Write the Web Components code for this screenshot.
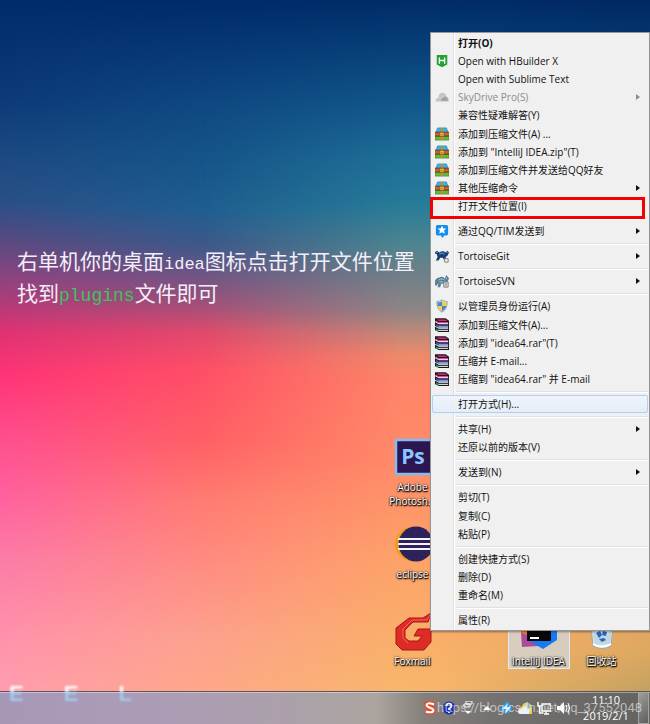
<!DOCTYPE html>
<html lang="zh-CN">
<head>
<meta charset="utf-8">
<title>Desktop</title>
<style>
    body {
        margin: 0;
        font-family: "Open Sans", "Noto Sans CJK SC", sans-serif;
        font-size: 10px;
    }
</style>
</head>
<body>
<desktop-screen>
    <desktop-note slot="note"></desktop-note>

    <desktop-icon slot="icons" icon="ps" style="grid-area: 1 / 1">Adobe<br>Photosh...</desktop-icon>
    <desktop-icon slot="icons" icon="eclipse" style="grid-area: 2 / 1">eclipse</desktop-icon>
    <desktop-icon slot="icons" icon="foxmail" style="grid-area: 3 / 1">Foxmail</desktop-icon>
    <desktop-icon slot="icons" icon="idea" style="grid-area: 3 / 3" selected>IntelliJ IDEA</desktop-icon>
    <desktop-icon slot="icons" icon="bin" style="grid-area: 3 / 4">回收站</desktop-icon>

    <context-menu slot="menu">
        <menu-item bold>打开(O)</menu-item>
        <menu-item icon="hbuilder">Open with HBuilder X</menu-item>
        <menu-item>Open with Sublime Text</menu-item>
        <menu-item icon="cloud" disabled submenu>SkyDrive Pro(S)</menu-item>
        <menu-item>兼容性疑难解答(Y)</menu-item>
        <menu-item icon="zip">添加到压缩文件(A) ...</menu-item>
        <menu-item icon="zip">添加到 "IntelliJ IDEA.zip"(T)</menu-item>
        <menu-item icon="zip">添加到压缩文件并发送给QQ好友</menu-item>
        <menu-item icon="zip" submenu>其他压缩命令</menu-item>
        <menu-item marked>打开文件位置(I)</menu-item>
        <menu-line></menu-line>
        <menu-item icon="tim" submenu>通过QQ/TIM发送到</menu-item>
        <menu-line></menu-line>
        <menu-item icon="git" submenu>TortoiseGit</menu-item>
        <menu-line></menu-line>
        <menu-item icon="svn" submenu>TortoiseSVN</menu-item>
        <menu-line></menu-line>
        <menu-item icon="shield">以管理员身份运行(A)</menu-item>
        <menu-item icon="rar">添加到压缩文件(A)...</menu-item>
        <menu-item icon="rar">添加到 "idea64.rar"(T)</menu-item>
        <menu-item icon="rar">压缩并 E-mail...</menu-item>
        <menu-item icon="rar">压缩到 "idea64.rar" 并 E-mail</menu-item>
        <menu-line></menu-line>
        <menu-item active>打开方式(H)...</menu-item>
        <menu-line></menu-line>
        <menu-item submenu>共享(H)</menu-item>
        <menu-item>还原以前的版本(V)</menu-item>
        <menu-line></menu-line>
        <menu-item submenu>发送到(N)</menu-item>
        <menu-line></menu-line>
        <menu-item>剪切(T)</menu-item>
        <menu-item>复制(C)</menu-item>
        <menu-item>粘贴(P)</menu-item>
        <menu-line></menu-line>
        <menu-item>创建快捷方式(S)</menu-item>
        <menu-item>删除(D)</menu-item>
        <menu-item>重命名(M)</menu-item>
        <menu-line></menu-line>
        <menu-item>属性(R)</menu-item>
    </context-menu>

    <task-bar slot="taskbar"></task-bar>
</desktop-screen>

<script>
    // 16x16 menu icons
    const MENU_ICONS = {
        hbuilder: `<path d="M2 1h12v11l-6 3-6-3z" fill="#1fa22e"/><path d="M5 4v7M11 4v7M5 7.5h6" stroke="#fff" stroke-width="1.6"/>`,
        cloud: `<path d="M1 13q-1-4 3-4 0-6 5-6 3 0 4 4 3 1 3 6z" fill="#c4c4c4"/><path d="M6 13q-1-3 2-4 1-3 4-2 3 0 4 6z" fill="#a2a2a2" stroke="#eee" stroke-width=".7"/>`,
        zip: `<path d="M3 1h10l2 5H1z" fill="#35b5e8" stroke="#1579a8" stroke-width=".7"/><path d="M0 6h16v4.500H0z" fill="#e5542e"/><path d="M0 10h16v5H0z" fill="#63b83c" stroke="#367b22" stroke-width=".6"/><path d="M0 6h16M0 10.500h16" stroke="#5b3a16"/><path d="M8 1v14" stroke="#c98a28" stroke-width="2.400"/><path d="M5.500 6h5v4.500h-5z" fill="#f8d052" stroke="#85501a"/><path d="M7 8.300h2" stroke="#85501a"/>`,
        tim: `<path d="M3 1h10q2 0 2 2v8q0 2-2 2h-2l-3 3-1-3H3q-2 0-2-2V3q0-2 2-2z" fill="#118df0"/><path d="M8 2l1.500 3 3.500.2-2.700 2.300.9 3.500L8 9.300 4.800 11l.9-3.500L3 5.200 6.500 5z" fill="#fff"/>`,
        git: `<path d="M0 4l2-2 3 2q4-3 7 0l2-2 2 2-2 4-2 1 1 3h-3l-1-2H6l-2 3H1l2-4-1-3-2-1z" fill="#173b72"/><path d="M5 6q3-3 6 0M1.500 4h1.500M13 4h1.500" fill="none" stroke="#78b9ed"/><path d="M11 11h4v4h-4z" fill="#eee" stroke="#777"/>`,
        svn: `<path d="M0 9q0-4 5-5 4-2 6 1l2-4 3 4-2 4 1 5h-4l-1-3H7l-1 4H3l1-5-2 3H0z" fill="#587d97"/><path d="M4 7q3-3 7 0M13 4v2M5 9h4" fill="none" stroke="#b3d4e5"/><path d="M10 9h5v6h-5z" fill="#ddd" stroke="#777"/><path d="M12.500 10v4" stroke="#777"/>`,
        shield: `<path d="M8 1q3 2 6 2 0 9-6 12Q2 12 2 3q3 0 6-2z" fill="#ddd" stroke="#8a9aa5"/><path d="M8 2.500V8H3V4q3 0 5-1.500zM8 8h5q-1 4-5 6z" fill="#4389c9"/><path d="M8 2.500Q10 4 13 4v4H8zM3 8h5v6Q4 12 3 8z" fill="#f5ce47"/>`,
        rar: `<path d="M0 1h12l4 3v2H4L0 3z" fill="#d02a78"/><path d="M0 6l4 2h12v3H4L0 9z" fill="#3755b8"/><path d="M0 11l4 2h12v3H4l-4-2z" fill="#129667"/><path d="M0 1h12l4 3H4zM0 5.500l4 2.300h12M0 10.500l4 2.300h12M.5 1v3M.5 6v3M.5 11v3M4 15.500h12" stroke="#24131d" stroke-width="1.200"/><path d="M4 6h11M4 10.300h11M4 14.300h11" stroke="#e5e0e0"/><path d="M15.500 4v12" stroke="#24131d"/>`
    };

    // 36x36 desktop icons
    const DESKTOP_ICONS = {
        ps: `<path d="M1 1h38v34H1z" fill="#2c1551" stroke="#81bcf3" stroke-width="2.500"/><text x="18" y="25" text-anchor="middle" font-family="Open Sans" font-size="21" font-weight="700" fill="#88c7ff" style="text-shadow: none">Ps</text>`,
        eclipse: `<circle cx="17" cy="18" r="17" fill="#f59b21"/><circle cx="21" cy="18" r="17.500" fill="#2d2259"/><path d="M3 13h36M3 18h36M3 23h36" stroke="#f5f3fa" stroke-width="2.200"/>`,
        foxmail: `<path d="M36 0l-3 9H18l-8 8v8l4 3h9l4-5h-8l4-7h13v13l-7 8H7l-6-6V15L14 5h14z" fill="#df2b27" stroke="#a51915"/><path d="M35 2l-3 5H17L8 16v9l5 5" fill="none" stroke="#f5635a"/>`,
        idea: `<path d="M0 20l9-13 9 26L1 34z" fill="#a94d9b"/><path d="M0 14l9-11v20L0 20z" fill="#f5782e"/><path d="M21 4l15 8v15l-14 9-12-7z" fill="#167bf3"/><path d="M6 5h24v23H6z" fill="#080808"/><path d="M9 25h9" stroke="#fff" stroke-width="2"/>`,
        bin: `<path d="M6 5h24l-3 28q-9 5-18 0z" fill="#e2edf3" fill-opacity=".85" stroke="#94a9b5"/><path d="M8 16l5 5 3-6 6 8 6-7-2 15-15 1z" fill="#c3d5df"/><path d="M12 20l4-2 2 4-3 3zM19 18l4 1-1 4-4-1zM15 26l5-1 2 2-4 2z" fill="#2467bc"/><path d="M9 31q9 5 18 0" fill="none" stroke="#fff" stroke-width="2"/>`
    };

    // 14x14 tray icons
    const TRAY_ICONS = [
        ['搜狗输入法', `<path d="M11 3.500Q4 1 3.500 4C3.500 7 10.500 6.500 10.500 9.500 10 12 5 11.500 3 10.500" fill="none" stroke="#f04a23" stroke-width="5"/><path d="M11 3.500Q4 1 3.500 4C3.500 7 10.500 6.500 10.500 9.500 10 12 5 11.500 3 10.500" fill="none" stroke="#fff" stroke-width="2"/>`],
        ['帮助', `<circle cx="7" cy="7" r="6.500" fill="#1b2fae"/><path d="M4.500 5q0-2.500 2.500-2.500T9.500 5Q9.500 6.500 7 7.500V9M7 10.500v1.500" fill="none" stroke="#fff" stroke-width="1.700"/>`],
        ['还原', `<path d="M5 0h6v3H5zM3 3h6v3H3z" fill="#777" stroke="#fff"/><path d="M4 10h6l-3 3z" fill="#fff"/>`],
        ['显示隐藏的图标', `<path d="M3 9l4-4 4 4z" fill="#fff"/>`],
        ['迅雷', `<path d="M8 0q5 6 5 9-6 7-12-1z" fill="#2f9bea"/><path d="M9 2L3 8h4l-1 5 6-7H8z" fill="#d5f1ff"/>`],
        ['云盘', `<path d="M0 11q0-5 4-5 1-5 6-4 4 1 4 5v6H2z" fill="#f3c944"/><path d="M0 12q0-4 4-4 3-5 7 0v5H2z" fill="#e6f4ff"/><path d="M9 1l4 5-4 2z" fill="#5ab9ed"/>`],
        ['网络', `<path d="M5 3h9v7H5zM7 13h5M9 10v3" fill="#777" stroke="#fff" stroke-width="1.400"/><path d="M1 1v4h3M2.500 5v7h4" fill="none" stroke="#fff" stroke-width="1.400"/>`],
        ['音量', `<path d="M1 5h3l4-4v12L4 9H1z" fill="#fff"/><path d="M10 4q2 3 0 6M12 2q3 5 0 10" fill="none" stroke="#fff"/>`]
    ];

    class DesktopScreen extends HTMLElement {
        constructor() {
            super();
            this.attachShadow({ mode: 'open' });
            // The wallpaper is four vertical gradients, each one fading into the next from left to right.
            this.shadowRoot.innerHTML = `
            <style>
                :host {
                    position: relative;
                    display: flex;
                    flex-direction: column;
                    min-height: 100vh;
                    overflow: hidden;
                    isolation: isolate;
                    background: linear-gradient(#002c6a 0%, #0d3b78 14%, #1d4a82 22%, #2b4f88 28%, #60497f 34%, #8a4480 38%, #b33b79 42%, #e03274 46%, #ff3478 52%, #ff4f90 61%, #ff62a0 69%, #fc7ba8 77%, #ff92ac 88%, #ff9eb0 96%);
                }

                .strip {
                    position: absolute;
                    inset: 0;
                    z-index: -1;
                }

                .one {
                    background: linear-gradient(#002b69 0%, #0f4780 14%, #155488 22%, #1f5e90 29%, #3f588a 34%, #6f5585 38%, #a05078 42%, #e04a6c 46%, #ff4e66 51%, #ff6065 61%, #ff7b72 69%, #ff8a80 77%, #fda18e 88%, #ffa888 96%);
                    mask-image: linear-gradient(to right, transparent, #000 31%);
                }

                .two {
                    background: linear-gradient(#002c68 0%, #105689 14%, #1f6f98 22%, #267b98 28%, #4f858f 34%, #6f8088 38%, #8f8585 43%, #c08a78 46%, #ec8a6a 49%, #ff8568 53%, #ff8b68 64%, #fda268 77%, #f7b76a 96%);
                    mask-image: linear-gradient(to right, transparent 31%, #000 62%);
                }

                .three {
                    background: linear-gradient(#002862 0%, #0d4c80 14%, #1f7595 25%, #40868c 38%, #c09080 51%, #f0a068 77%, #dda860 90%, #c0a060 96%);
                    mask-image: linear-gradient(to right, transparent 68%, #000);
                }

                main {
                    flex: 1;
                    display: flex;
                    flex-direction: column;
                    justify-content: space-between;
                }

                .icons {
                    display: grid;
                    grid-template-columns: repeat(4, 63px);
                    grid-template-rows: repeat(3, 72px);
                    row-gap: 15px;
                    justify-content: end;
                    justify-items: center;
                    align-items: start;
                    padding: 0 17px 8px 0;
                }
            </style>
            <div class="strip one"></div>
            <div class="strip two"></div>
            <div class="strip three"></div>
            <main>
                <slot name="note"></slot>
                <div class="icons"><slot name="icons"></slot></div>
            </main>
            <slot name="taskbar"></slot>
            <slot name="menu"></slot>`;
        }
    }
    customElements.define('desktop-screen', DesktopScreen);

    class DesktopNote extends HTMLElement {
        constructor() {
            super();
            this.attachShadow({ mode: 'open' });
            this.shadowRoot.innerHTML = `
            <style>
                :host {
                    display: block;
                    padding: 244px 0 0 17px;
                    color: #f4eef8;
                    font-family: "Noto Sans CJK SC", sans-serif;
                    font-size: 21px;
                    line-height: 32px;
                    white-space: nowrap;
                }

                p {
                    margin: 0;
                }

                span {
                    font-family: "Liberation Mono", monospace;
                    font-size: 17px;
                    line-height: 0;
                }

                .green {
                    color: #35c860;
                    font-size: 18px;
                }
            </style>
            <p>右单机你的桌面<span>idea</span>图标点击打开文件位置</p>
            <p>找到<span class="green">plugins</span>文件即可</p>`;
        }
    }
    customElements.define('desktop-note', DesktopNote);

    class DesktopIcon extends HTMLElement {
        constructor() {
            super();
            this.attachShadow({ mode: 'open' });
        }

        connectedCallback() {
            this.shadowRoot.innerHTML = `
            <style>
                :host {
                    display: flex;
                    flex-direction: column;
                    align-items: center;
                    gap: 5px;
                    box-sizing: border-box;
                    width: 62px;
                    padding: 2px 0 1px;
                    color: #fff;
                    line-height: 14px;
                    text-align: center;
                    white-space: nowrap;
                    text-shadow: 0 0 2px #000, 1px 1px 1px #000, 0 1px 2px #000;
                }

                :host([selected]) {
                    background: rgba(205, 222, 240, 0.65);
                    box-shadow: inset 0 0 0 1px rgba(225, 240, 255, 0.8);
                }

                svg {
                    width: 36px;
                    height: 36px;
                    overflow: visible;
                }
            </style>
            <svg viewBox="0 0 36 36" aria-hidden="true">${DESKTOP_ICONS[this.getAttribute('icon')]}</svg>
            <div><slot></slot></div>`;
        }
    }
    customElements.define('desktop-icon', DesktopIcon);

    class ContextMenu extends HTMLElement {
        constructor() {
            super();
            this.attachShadow({ mode: 'open' });
            this.shadowRoot.innerHTML = `
            <style>
                :host {
                    position: absolute;
                    top: 32px;
                    right: 0;
                    bottom: 93px;
                    display: flex;
                    flex-direction: column;
                    box-sizing: border-box;
                    width: 220px;
                    padding: 1px;
                    border: 1px solid #979797;
                    background: linear-gradient(to right, transparent 22px, #e0e0e0 22px 23px, #fff 23px 24px, transparent 24px) #f0f0f0;
                    box-shadow: 1px 1px 2px rgba(0, 0, 0, 0.4);
                }
            </style>
            <slot></slot>`;
            this.setAttribute('role', 'menu');
        }
    }
    customElements.define('context-menu', ContextMenu);

    class MenuItem extends HTMLElement {
        constructor() {
            super();
            this.attachShadow({ mode: 'open' });
        }

        connectedCallback() {
            const icon = MENU_ICONS[this.getAttribute('icon')] || '';
            const disabled = this.hasAttribute('disabled') ? 'disabled' : '';
            const arrow = this.hasAttribute('submenu')
                ? '<svg class="arrow" viewBox="0 0 4 8" aria-hidden="true"><path d="M0 1l4 3-4 3z" fill="currentColor"/></svg>'
                : '';

            this.shadowRoot.innerHTML = `
            <style>
                :host {
                    position: relative;
                    display: flex;
                    flex: 1 0 18px;
                    color: #111;
                }

                :host([disabled]) {
                    color: #8c8c8c;
                }

                button {
                    flex: 1;
                    display: flex;
                    align-items: center;
                    padding: 0 7px 0 2px;
                    border: 1px solid transparent;
                    border-radius: 2px;
                    background: none;
                    color: inherit;
                    font: inherit;
                    line-height: 14px;
                    text-align: left;
                    white-space: nowrap;
                }

                :host([bold]) button {
                    font-weight: bold;
                }

                :host([active]) button {
                    border-color: #aecff7;
                    background: linear-gradient(rgba(240, 246, 252, 0.8), rgba(226, 236, 248, 0.8));
                }

                :host([marked])::after {
                    content: "";
                    position: absolute;
                    z-index: 1;
                    inset: 0 3px -4px -2px;
                    border: 3px solid #f40000;
                }

                .icon {
                    width: 14px;
                    height: 14px;
                    margin-right: 9px;
                }

                .label {
                    flex: 1;
                }

                .arrow {
                    width: 4px;
                    height: 8px;
                }
            </style>
            <button type="button" role="menuitem" ${disabled}>
                <svg class="icon" viewBox="0 0 16 16" fill="none" aria-hidden="true">${icon}</svg>
                <span class="label"><slot></slot></span>
                ${arrow}
            </button>`;
        }
    }
    customElements.define('menu-item', MenuItem);

    class MenuLine extends HTMLElement {
        constructor() {
            super();
            this.attachShadow({ mode: 'open' });
            this.shadowRoot.innerHTML = `
            <style>
                :host {
                    display: block;
                    padding: 3px 0 2px 24px;
                }

                div {
                    height: 1px;
                    background: #e0e0e0;
                    border-bottom: 1px solid #fff;
                }
            </style>
            <div></div>`;
        }
    }
    customElements.define('menu-line', MenuLine);

    class TaskBar extends HTMLElement {
        constructor() {
            super();
            this.attachShadow({ mode: 'open' });
            const tray = TRAY_ICONS.map(([name, art]) =>
                `<button type="button" aria-label="${name}"><svg viewBox="0 0 14 14" aria-hidden="true">${art}</svg></button>`
            ).join('');

            this.shadowRoot.innerHTML = `
            <style>
                :host {
                    position: relative;
                    display: flex;
                    justify-content: flex-end;
                    align-items: stretch;
                    height: 32px;
                    border-top: 1px solid #5d5360;
                    box-shadow: inset 0 1px rgba(255, 255, 255, 0.4);
                    background: linear-gradient(to right, #a697b7, #ab9cb6 22%, #aba0ac 42%, #aba49f 58%, #86807a 65%, #747171 76%, #64635f);
                    color: #fff;
                }

                .tray {
                    display: flex;
                    align-items: center;
                    gap: 5px;
                }

                button {
                    padding: 0;
                    border: 0;
                    background: none;
                }

                .tray svg {
                    display: block;
                    width: 14px;
                    height: 14px;
                }

                time {
                    width: 64px;
                    margin-left: 4px;
                    font-size: 11px;
                    line-height: 16px;
                    text-align: center;
                }

                .show-desktop {
                    width: 11px;
                    margin-right: 1px;
                    border: 1px solid #a5a5a3;
                    background: linear-gradient(135deg, #9d9d9c, #5d5f60);
                }

                /* wallpaper letters shining through the glass */
                .glow {
                    position: absolute;
                    top: -9px;
                    left: 9px;
                    display: flex;
                    gap: 40px;
                    font: bold 22px/22px "Liberation Sans", sans-serif;
                    color: transparent;
                    background: linear-gradient(#fff 8px, #a3cbee 9px);
                    background-clip: text;
                    filter: blur(1px);
                }

                .mark {
                    position: absolute;
                    right: 8px;
                    top: 6px;
                    font-size: 13px;
                    line-height: 20px;
                    font-family: Roboto, sans-serif;
                    color: rgba(235, 235, 235, 0.65);
                    white-space: nowrap;
                    pointer-events: none;
                }
            </style>
            <div class="glow" aria-hidden="true"><span>E</span><span>E</span><span>L</span></div>
            <div class="tray">${tray}</div>
            <time datetime="2019-02-01T11:10">11:10<br>2019/2/1</time>
            <button class="show-desktop" type="button" aria-label="显示桌面"></button>
            <span class="mark">https://blog.csdn.net/qq_37552048</span>`;
        }
    }
    customElements.define('task-bar', TaskBar);
</script>
</body>
</html>
